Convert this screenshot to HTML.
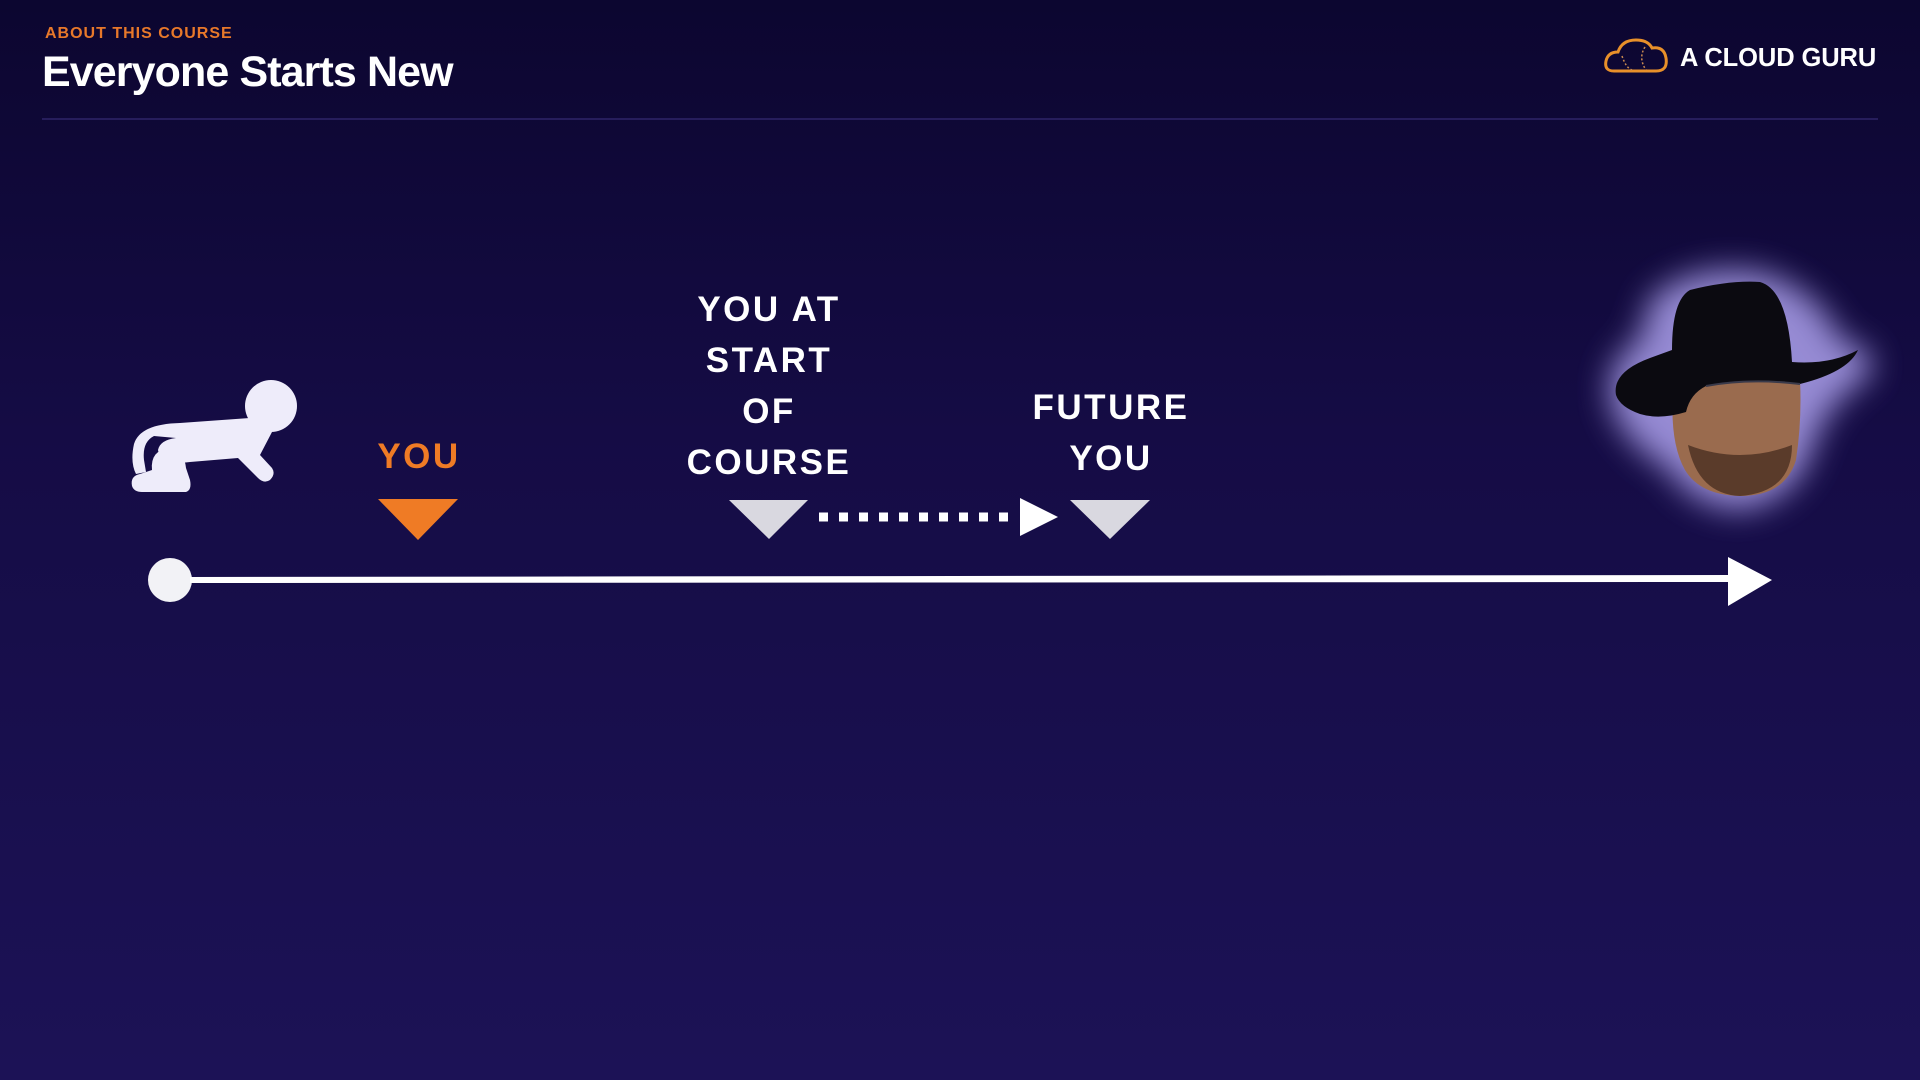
<!DOCTYPE html>
<html><head><meta charset="utf-8"><style>
html,body{margin:0;padding:0}
body{width:1920px;height:1080px;overflow:hidden;background:linear-gradient(180deg,#0c0630 0%,#150c45 40%,#1c1256 100%);font-family:"Liberation Sans",sans-serif;position:relative}
.t{position:absolute;font-weight:bold;white-space:nowrap}
.lbl{position:absolute;color:#fff;font-weight:bold;font-size:35px;letter-spacing:2.5px;text-align:center;line-height:51px;transform:translateX(-50%)}
</style></head><body>
<div class="t" style="left:45px;top:25px;font-size:16px;color:#e8782a;letter-spacing:1px">ABOUT THIS COURSE</div>
<div class="t" style="left:42px;top:48px;font-size:43px;color:#fff;letter-spacing:-0.9px">Everyone Starts New</div>
<div style="position:absolute;left:42px;top:118px;width:1836px;height:2px;background:#261d5c"></div>
<div class="t" style="left:1680px;top:44px;font-size:25.5px;color:#fff;letter-spacing:-0.1px">A CLOUD GURU</div>
<svg width="1920" height="1080" style="position:absolute;left:0;top:0">
<defs><filter id="b" x="-50%" y="-50%" width="200%" height="200%"><feGaussianBlur stdDeviation="16"/></filter></defs>
<path d="M1614 71 Q1604 71 1606 61 Q1608 52 1618 52 Q1622 40 1636 40 Q1648 40 1652 48 Q1664 46 1666 58 Q1668 71 1656 71 Z" fill="none" stroke="#e8902a" stroke-width="3"/>
<path d="M1622 56 Q1626 68 1632 70 M1645 47 Q1638 58 1646 70" fill="none" stroke="#c98a50" stroke-width="1.5" stroke-dasharray="2 2"/>
<g fill="#eeecfa">
<circle cx="271" cy="406" r="26"/>
<path d="M180 423 L264 417 Q276 418 272 432 L260 455 L272 468 Q276 474 270 480 Q264 484 258 478 L238 458 L190 462 Q160 466 158 450 Q160 440 176 438 L154 436 Q142 442 144 460 L146 472 L136 474 Q130 462 134 444 Q140 424 180 423 Z"/>
<path d="M170 448 Q150 450 152 470 L140 474 Q130 476 132 486 Q134 492 142 492 L186 492 Q192 490 190 480 L186 468 Q184 450 170 448 Z"/>
</g>
<polygon points="378,499 458,499 418,540" fill="#ef7b25"/>
<polygon points="729,500 808,500 769,539" fill="#d9d8e0"/>
<polygon points="1070,500 1150,500 1110,539" fill="#d9d8e0"/>
<line x1="819" y1="517" x2="1012" y2="517" stroke="#fff" stroke-width="9" stroke-dasharray="9 11"/>
<polygon points="1020,498 1058,517 1020,536" fill="#fff"/>
<circle cx="170" cy="580" r="22" fill="#f2f2f6"/>
<path d="M190 577 L1730 575 L1730 582 L190 583 Z" fill="#fff"/>
<polygon points="1728,557 1772,580 1728,606" fill="#fff"/>
<path d="M1650 300 Q1690 262 1760 272 Q1820 290 1840 340 Q1880 350 1870 375 Q1830 400 1815 440 Q1800 500 1740 510 Q1690 505 1670 470 Q1620 440 1610 400 Q1605 360 1640 340 Z" fill="#9d92dc" filter="url(#b)" opacity=".95"/>
<path d="M1674 380 Q1668 440 1685 470 Q1700 495 1740 496 Q1785 496 1796 460 Q1802 420 1800 380 Z" fill="#9a6b4e"/>
<path d="M1688 445 Q1740 465 1792 445 Q1792 492 1740 496 Q1698 494 1688 445 Z" fill="#5a3b2a"/>
<path d="M1616 395 Q1612 372 1650 358 L1672 350 Q1672 300 1690 290 Q1730 280 1760 282 Q1788 290 1792 362 Q1830 365 1858 350 Q1848 372 1800 384 Q1750 378 1706 386 Q1690 394 1686 412 Q1660 420 1640 414 Q1620 407 1616 395 Z" fill="#0b0a10"/>
<path d="M1706 386 Q1750 378 1800 384" stroke="#3a3a4a" stroke-width="2" fill="none"/>
</svg>
<div class="lbl" style="left:419px;top:431px;color:#ef7b25">YOU</div>
<div class="lbl" style="left:769px;top:284px">YOU AT<br>START<br>OF<br>COURSE</div>
<div class="lbl" style="left:1111px;top:382px">FUTURE<br>YOU</div>
</body></html>
